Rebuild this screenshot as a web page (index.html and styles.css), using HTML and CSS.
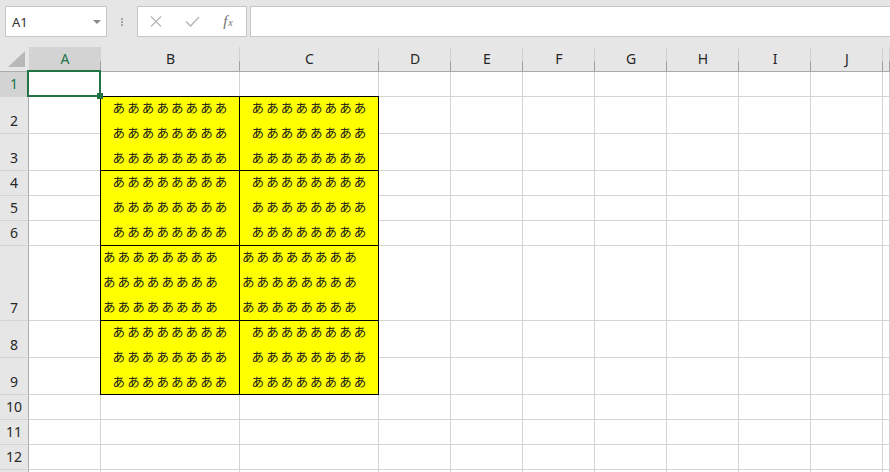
FILE: index.html
```html
<!DOCTYPE html>
<html lang="ja">
<head>
<meta charset="utf-8">
<title>Sheet</title>
<link rel="stylesheet" href="styles.css">
</head>
<body>
<div class="toolbar">
  <div class="namebox"><span class="ref">A1</span><span class="dd"></span></div>
  <div class="grip"><i></i><i></i><i></i></div>
  <div class="fbtns">
    <span class="fb"><svg width="12" height="11" viewBox="0 0 12 11"><path d="M1 0.5 L11 10.5 M11 0.5 L1 10.5" stroke="#b9b9b9" stroke-width="1.4" fill="none"/></svg></span>
    <span class="fb"><svg width="15" height="11" viewBox="0 0 15 11"><path d="M1 5.5 L5.5 10 L14 1" stroke="#b9b9b9" stroke-width="1.6" fill="none"/></svg></span>
    <span class="fb fx"><i>f</i><i class="x">x</i></span>
  </div>
  <div class="finput"></div>
</div>
<div class="sheet">
  <div class="corner"><svg width="18" height="16" viewBox="0 0 18 16"><polygon points="17,0 17,16 0,16" fill="#b8b8b8"/></svg></div>
  <div class="ch sel-h">A</div><div class="ch">B</div><div class="ch">C</div><div class="ch">D</div><div class="ch">E</div><div class="ch">F</div><div class="ch">G</div><div class="ch">H</div><div class="ch">I</div><div class="ch">J</div><div class="ch"></div>

  <div class="rh sel-h">1</div><div class="c a1"><div class="sel"></div></div><div class="c"></div><div class="c"></div><div class="c"></div><div class="c"></div><div class="c"></div><div class="c"></div><div class="c"></div><div class="c"></div><div class="c"></div><div class="c"></div>

  <div class="rh">2</div><div class="c"></div><div class="c"></div><div class="c"></div><div class="c"></div><div class="c"></div><div class="c"></div><div class="c"></div><div class="c"></div><div class="c"></div>
  <div class="rh">3</div><div class="c"></div><div class="c"></div><div class="c"></div><div class="c"></div><div class="c"></div><div class="c"></div><div class="c"></div><div class="c"></div><div class="c"></div>
  <div class="rh">4</div><div class="c"></div><div class="c"></div><div class="c"></div><div class="c"></div><div class="c"></div><div class="c"></div><div class="c"></div><div class="c"></div><div class="c"></div>
  <div class="rh">5</div><div class="c"></div><div class="c"></div><div class="c"></div><div class="c"></div><div class="c"></div><div class="c"></div><div class="c"></div><div class="c"></div><div class="c"></div>
  <div class="rh">6</div><div class="c"></div><div class="c"></div><div class="c"></div><div class="c"></div><div class="c"></div><div class="c"></div><div class="c"></div><div class="c"></div><div class="c"></div>
  <div class="rh">7</div><div class="c"></div><div class="c"></div><div class="c"></div><div class="c"></div><div class="c"></div><div class="c"></div><div class="c"></div><div class="c"></div><div class="c"></div>
  <div class="rh">8</div><div class="c"></div><div class="c"></div><div class="c"></div><div class="c"></div><div class="c"></div><div class="c"></div><div class="c"></div><div class="c"></div><div class="c"></div>
  <div class="rh">9</div><div class="c"></div><div class="c"></div><div class="c"></div><div class="c"></div><div class="c"></div><div class="c"></div><div class="c"></div><div class="c"></div><div class="c"></div>

  <div class="rh">10</div><div class="c"></div><div class="c"></div><div class="c"></div><div class="c"></div><div class="c"></div><div class="c"></div><div class="c"></div><div class="c"></div><div class="c"></div><div class="c"></div><div class="c"></div>
  <div class="rh">11</div><div class="c"></div><div class="c"></div><div class="c"></div><div class="c"></div><div class="c"></div><div class="c"></div><div class="c"></div><div class="c"></div><div class="c"></div><div class="c"></div><div class="c"></div>
  <div class="rh">12</div><div class="c"></div><div class="c"></div><div class="c"></div><div class="c"></div><div class="c"></div><div class="c"></div><div class="c"></div><div class="c"></div><div class="c"></div><div class="c"></div><div class="c"></div>
  <div class="rh"></div><div class="c"></div><div class="c"></div><div class="c"></div><div class="c"></div><div class="c"></div><div class="c"></div><div class="c"></div><div class="c"></div><div class="c"></div><div class="c"></div><div class="c"></div>

  <div class="block">
    <div class="m"><div class="t">ああああああああ<br>ああああああああ<br>ああああああああ</div></div>
    <div class="m"><div class="t">ああああああああ<br>ああああああああ<br>ああああああああ</div></div>
    <div class="m"><div class="t">ああああああああ<br>ああああああああ<br>ああああああああ</div></div>
    <div class="m"><div class="t">ああああああああ<br>ああああああああ<br>ああああああああ</div></div>
    <div class="m left"><div class="t">ああああああああ<br>ああああああああ<br>ああああああああ</div></div>
    <div class="m left"><div class="t">ああああああああ<br>ああああああああ<br>ああああああああ</div></div>
    <div class="m"><div class="t">ああああああああ<br>ああああああああ<br>ああああああああ</div></div>
    <div class="m"><div class="t">ああああああああ<br>ああああああああ<br>ああああああああ</div></div>
  </div>
</div>
</body>
</html>
```
FILE: styles.css
```css
html, body {
  margin: 0;
  padding: 0;
  overflow: hidden;
}
body {
  width: 890px;
  height: 472px;
  background: #e6e6e6;
  font-family: "Noto Sans", "Liberation Sans", sans-serif;
  color: #262626;
}

/* toolbar */
.toolbar {
  display: flex;
  height: 47px;
  box-sizing: border-box;
  padding: 6px 0 10px 5px;
  background: #e6e6e6;
}
.namebox {
  width: 102px;
  height: 31px;
  box-sizing: border-box;
  border: 1px solid #c6c6c6;
  background: #fff;
  display: flex;
  align-items: center;
  padding-left: 6px;
  font-size: 13px;
  color: #333;
}
.dd {
  margin-left: auto;
  margin-right: 5px;
  width: 0;
  height: 0;
  border-left: 4px solid transparent;
  border-right: 4px solid transparent;
  border-top: 4px solid #8a8a8a;
}
.grip {
  width: 30px;
  display: flex;
  flex-direction: column;
  align-items: center;
  justify-content: center;
  gap: 1px;
}
.grip i {
  width: 2px;
  height: 2px;
  background: #a8a8a8;
}
.fbtns {
  width: 110px;
  height: 31px;
  box-sizing: border-box;
  border: 1px solid #c6c6c6;
  background: #fff;
  display: grid;
  grid-template-columns: repeat(3, 1fr);
  align-items: center;
  justify-items: center;
}
.fb {
  display: flex;
  align-items: center;
  justify-content: center;
}
.fx {
  font-family: "Liberation Serif", serif;
  color: #6e6e6e;
  font-size: 15px;
  line-height: 1;
}
.fx i { font-style: italic; }
.fx .x {
  font-size: 10px;
  margin-left: 1px;
  margin-top: 3px;
}
.finput {
  flex: 1;
  height: 31px;
  box-sizing: border-box;
  margin-left: 3px;
  margin-right: -1px;
  border: 1px solid #c6c6c6;
  background: #fff;
}

/* sheet */
.sheet {
  display: grid;
  grid-template-columns: 29px 72px 139px 139px repeat(7, 72px) 1fr;
  grid-template-rows: 25px 25px 37px 37px 25px 25px 25px 75px 37px 37px 25px 25px 25px 25px;
  background: #fff;
}
.corner {
  background: #e6e6e6;
  border-bottom: 1px solid #ababab;
  box-sizing: border-box;
  display: flex;
  align-items: flex-end;
  justify-content: flex-end;
  padding: 0 3px 4px 0;
}
.ch {
  box-sizing: border-box;
  border-bottom: 1px solid #ababab;
  background: linear-gradient(#d0d0d0 0 14px, #a2a2a2 14px) no-repeat right top / 1px 100%, #e6e6e6;
  display: flex;
  align-items: center;
  justify-content: center;
  font-size: 14px;
  line-height: 1;
}
.rh {
  box-sizing: border-box;
  background: #e6e6e6;
  border-right: 1px solid #ababab;
  border-bottom: 1px solid #d4d4d4;
  display: flex;
  align-items: flex-end;
  justify-content: center;
  font-size: 14px;
  line-height: 24px;
}
.sel-h {
  background-color: #d3d3d3;
  color: #217346;
}
.ch.sel-h {
  background: linear-gradient(#d0d0d0 0 14px, #a2a2a2 14px) no-repeat right top / 1px 100%, #d3d3d3;
}
.c {
  box-sizing: border-box;
  border-right: 1px solid #d4d4d4;
  border-bottom: 1px solid #d4d4d4;
}
.a1 {
  position: relative;
}
.sel {
  position: absolute;
  left: -2px;
  top: -2px;
  right: -1px;
  bottom: -1px;
  border: 2px solid #217346;
  z-index: 2;
}
.sel::after {
  content: "";
  position: absolute;
  width: 6px;
  height: 6px;
  right: -4px;
  bottom: -4px;
  background: #217346;
}

/* merged yellow block */
.block {
  grid-column: 3 / 5;
  grid-row: 3 / 11;
  margin: -1px 0 0 -1px;
  border-left: 1px solid #000;
  border-top: 1px solid #000;
  background: #ffff00;
  display: grid;
  grid-template-columns: 139px 139px;
  grid-template-rows: 74px 75px 75px 74px;
}
.m {
  box-sizing: border-box;
  border-right: 1px solid #000;
  border-bottom: 1px solid #000;
  font-family: "Noto Sans CJK JP", sans-serif;
  font-size: 12.5px;
  letter-spacing: 2.1px;
  line-height: 25px;
  color: #1a1a1a;
  text-align: center;
  white-space: nowrap;
}
.m .t {
  margin-top: -2px;
  padding-left: 2px;
}
.m.left {
  text-align: left;
  padding-left: 2px;
}
.m.left .t {
  padding-left: 0;
}
```
